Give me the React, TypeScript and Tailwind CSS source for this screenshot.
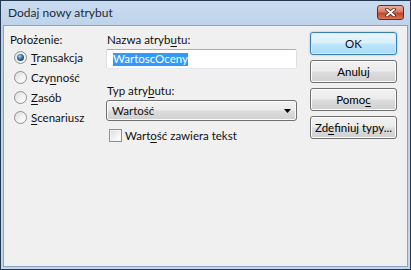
const btn =
  "h-[23px] w-full rounded-[3px] border border-[#707070] bg-[linear-gradient(to_bottom,#f2f2f2_0%,#ebebeb_48%,#dddddd_52%,#cfcfcf_100%)] shadow-[inset_0_0_0_1px_#fcfcfc] text-black leading-[15px] whitespace-nowrap flex items-center justify-center";

function Radio({ checked, children }: { checked?: boolean; children: React.ReactNode }) {
  return (
    <div className="h-[20px] flex items-center pl-[4px] gap-[4px]">
      <div className="w-[13px] h-[13px] rounded-full border border-[#8e8f8f] bg-[linear-gradient(135deg,#dcdcdc,#f4f4f4_60%,#ffffff)] flex items-center justify-center">
        {checked && (
          <div className="w-[7px] h-[7px] rounded-full bg-[radial-gradient(circle_at_40%_35%,#a9d3f5_0%,#2f6aa8_45%,#0d2c52_100%)]" />
        )}
      </div>
      <span>{children}</span>
    </div>
  );
}

function U({ children }: { children: React.ReactNode }) {
  return <span className="underline underline-offset-[2px] decoration-1">{children}</span>;
}

export default function App() {
  return (
    <div className="w-[411px] h-[270px] bg-[#24384f] p-px font-['Lato','Open_Sans',sans-serif] text-[11.5px] text-[#111]">
      <div className="h-full flex flex-col bg-[linear-gradient(to_bottom,#c9dbef,#bcd2ea_30px,#c2d6ec)] px-[2px] pb-[2px]">
        {/* title bar */}
        <div className="h-[24px] flex items-start justify-between pl-[5px] pr-[4px]">
          <span className="mt-[4px] text-[12px] leading-[16px] text-[#1e2a38]">Dodaj nowy atrybut</span>
          <div className="mt-[4px] w-[27px] h-[15px] rounded-[3px] border border-[#6b2a1c] bg-[linear-gradient(to_bottom,#eab0a0,#d77a62_45%,#c2452a_55%,#d9765c)] flex items-center justify-center">
            <svg width="11" height="9" viewBox="0 0 11 9">
              <path d="M2 1.5 L9 7.5 M9 1.5 L2 7.5" stroke="#5a1c10" strokeWidth="3.6" strokeLinecap="round" />
              <path d="M2 1.5 L9 7.5 M9 1.5 L2 7.5" stroke="#ffffff" strokeWidth="2" strokeLinecap="round" />
            </svg>
          </div>
        </div>

        {/* client area */}
        <div className="flex-1 border border-[#8aa2bf] bg-[#f0f0f0] flex pl-[6px] pt-[6px] leading-[15px]">
          <div className="w-[96px] flex flex-col">
            <span>Położenie:</span>
            <Radio checked>
              <U>T</U>ransakcja
            </Radio>
            <Radio>
              Czy<U>n</U>ność
            </Radio>
            <Radio>
              <U>Z</U>asób
            </Radio>
            <Radio>
              <U>S</U>cenariusz
            </Radio>
          </div>

          <div className="w-[191px] flex flex-col">
            <span className="pl-[1px]">
              Nazwa atryb<U>u</U>tu:
            </span>
            <div className="mt-[2px] h-[20px] border border-[#abadb3] border-l-[#dbdfe6] border-r-[#dbdfe6] border-b-[#e3e9ef] rounded-[2px] bg-white flex items-center pl-[6px]">
              <span className="bg-[#3399ff] text-white leading-[12px] pb-[1px]">WartoscOceny</span>
            </div>
            <span className="pl-[1px] mt-[14px]">
              Typ atry<U>b</U>utu:
            </span>
            <div className="mt-[2px] h-[21px] rounded-[3px] border border-[#707070] bg-[linear-gradient(to_bottom,#f2f2f2_0%,#ebebeb_48%,#dddddd_52%,#cfcfcf_100%)] shadow-[inset_0_0_0_1px_#fcfcfc] flex items-center justify-between pl-[5px] pr-[5px]">
              <span>Wartość</span>
              <svg width="7" height="4" viewBox="0 0 7 4">
                <polygon points="0,0 7,0 3.5,4" fill="#000" />
              </svg>
            </div>
            <div className="mt-[7px] flex items-center gap-[3px] pl-[3px]">
              <div className="w-[13px] h-[13px] border border-[#8e8f8f] bg-[linear-gradient(135deg,#d8d8d8,#f4f4f4_60%,#ffffff)] shadow-[inset_0_0_0_1px_#f4f4f4]" />
              <span>
                Wart<U>o</U>ść zawiera tekst
              </span>
            </div>
          </div>

          <div className="ml-[13px] w-[87px] flex flex-col gap-[5px]">
            <div className="h-[23px] w-full rounded-[3px] border border-[#3c7fb1] bg-[linear-gradient(to_bottom,#eaf6fd_0%,#d9f0fc_48%,#bee6fd_52%,#a7d9f5_100%)] shadow-[inset_0_0_0_1px_#cdeefd,0_0_2px_#66b4e6] flex items-center justify-center">
              OK
            </div>
            <div className={btn}>Anuluj</div>
            <div className={btn}>
              <span>
                Pomo<U>c</U>
              </span>
            </div>
            <div className={btn}>
              <span>
                Zd<U>e</U>finiuj typy...
              </span>
            </div>
          </div>
        </div>
      </div>
    </div>
  );
}
